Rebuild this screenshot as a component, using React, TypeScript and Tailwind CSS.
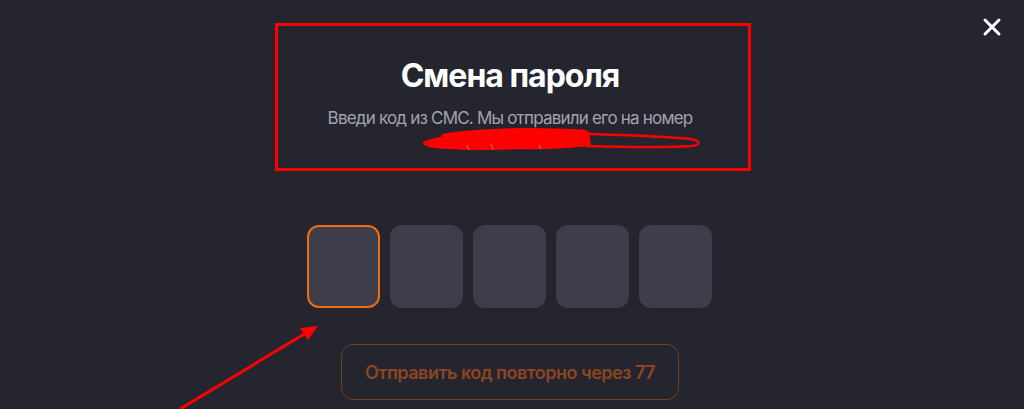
import React from 'react';

const CODE_LENGTH = 5;

export default function App() {
  return (
    <div className="relative w-full h-[409px] overflow-hidden bg-[#252530] font-['Inter','Noto_Sans',sans-serif]">
      {/* close */}
      <button className="absolute right-[22px] top-[17px] w-[20px] h-[20px] text-white">
        <svg viewBox="0 0 20 20" className="w-full h-full" fill="none" stroke="currentColor" strokeWidth="3" strokeLinecap="round">
          <path d="M3 3L17 17M17 3L3 17" />
        </svg>
      </button>

      <div className="flex flex-col items-center">
        {/* header, outlined in red */}
        <div className="mt-[23px] ml-[2px] w-[476px] h-[148px] border-[3px] border-[#ff0000] flex flex-col items-center">
          <h1 className="mt-[31px] mr-[6px] text-[32px] leading-[38px] font-bold text-white tracking-[-1px]">Смена пароля</h1>
          <p className="mt-[13px] mr-[6px] text-[17px] leading-[20px] text-[#a3a3ae] tracking-[-0.8px]">
            Введи код из СМС. Мы отправили его на номер
          </p>
          <svg viewBox="0 0 285 30" className="ml-[97px] mt-[-3px] w-[285px] h-[30px]">
            <path
              d="M4 17 C20 9 60 8 95 6 C115 3 140 4 170 6 L172 20 C150 24 120 25 95 24 C70 26 40 25 15 23 C8 22 3 20 4 17 Z"
              fill="#ff0000"
            />
            <path d="M25 11 C60 6 110 4 165 7 M20 21 C60 23 110 22 168 19" stroke="#ff0000" strokeWidth="5" strokeLinecap="round" fill="none" />
            <path
              d="M168 9 C200 10 240 11 272 14 C282 16 282 20 272 21 C240 23 200 22 168 21"
              stroke="#ff0000"
              strokeWidth="2.5"
              fill="none"
              strokeLinecap="round"
            />
            <path d="M48 20 L50 25 M72 19 L74 25 M120 20 L122 24" stroke="#d96a10" strokeWidth="1.2" />
          </svg>
        </div>

        {/* code inputs */}
        <div className="mt-[54px] mr-[5px] flex gap-[10px]">
          {Array.from({ length: CODE_LENGTH }).map((_, i) => (
            <div
              key={i}
              className={`w-[73px] h-[83px] rounded-[12px] bg-[#3e3e4b] ${i === 0 ? 'border-2 border-[#f06c12]' : ''}`}
            />
          ))}
        </div>

        <button className="mt-[36px] mr-[4px] w-[338px] h-[56px] rounded-[12px] border border-[#7a3d1c] text-[18px] font-semibold text-[#8c4620] tracking-[-0.5px]">
          Отправить код повторно через 77
        </button>
      </div>

      {/* red arrow annotation */}
      <svg className="absolute left-0 top-0 w-[1024px] h-[409px] pointer-events-none" viewBox="0 0 1024 409">
        <line x1="180" y1="409" x2="306" y2="333" stroke="#ff0000" strokeWidth="3" />
        <polygon points="318,326 300,328 308,340" fill="#ff0000" />
      </svg>
    </div>
  );
}
